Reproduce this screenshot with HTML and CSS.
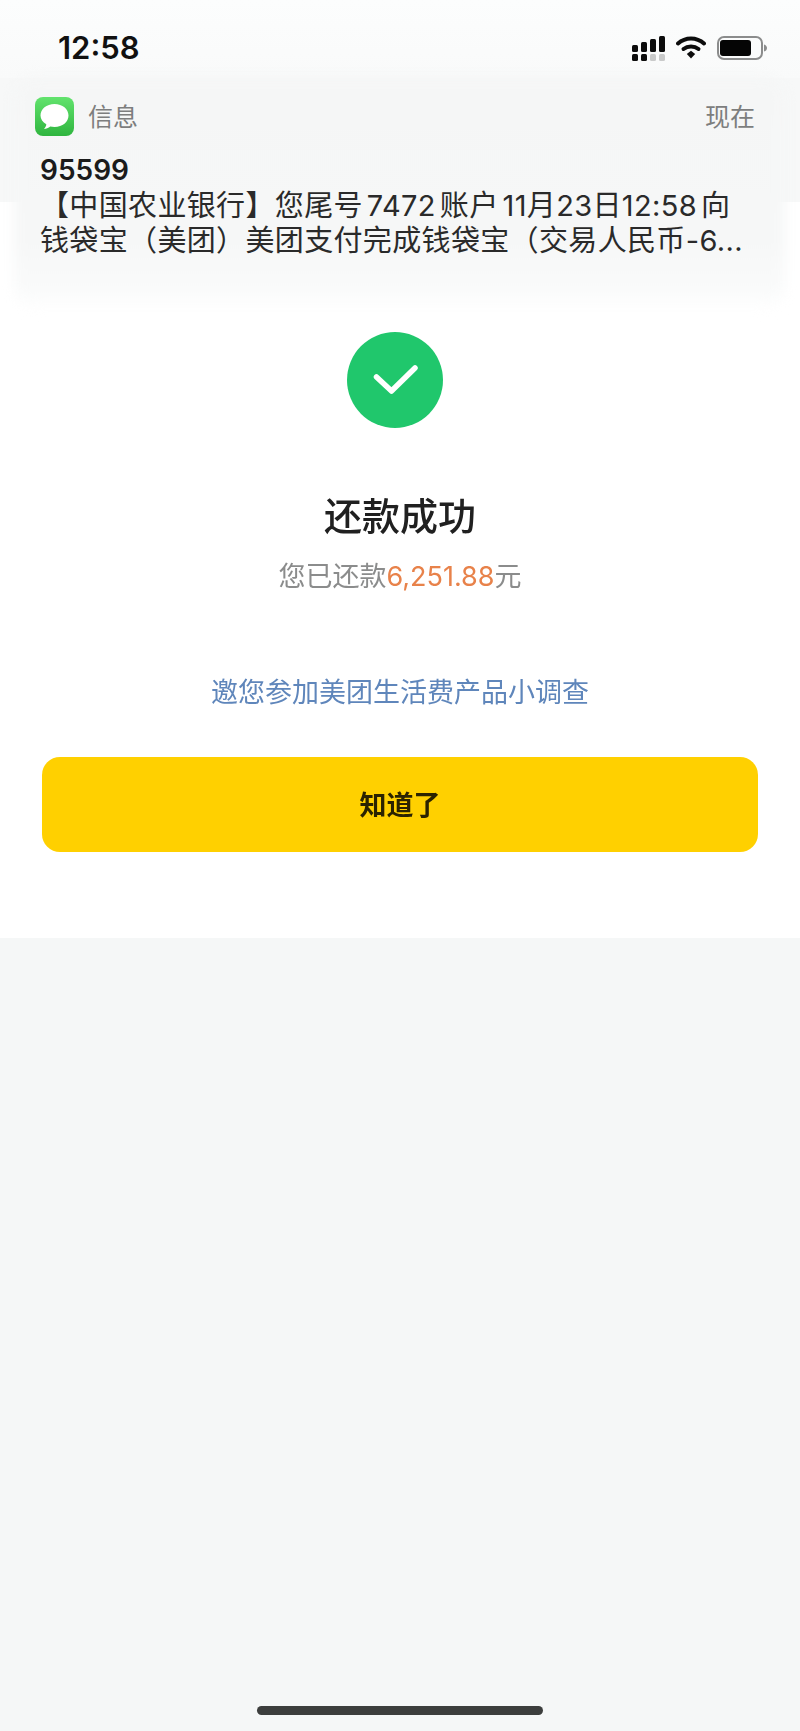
FILE: index.html
```html
<!DOCTYPE html>
<html lang="zh-CN">
<head>
<meta charset="utf-8">
<title>还款成功</title>
<link rel="stylesheet" href="styles.css">
</head>
<body>
<div class="page">
  <header class="topband">
    <div class="status">
      <span class="time">12:58</span>
      <div class="status-icons">
        <svg class="signal" width="33" height="25" viewBox="0 0 33 25">
          <rect x="0" y="9" width="6" height="7" rx="1.500" fill="#0c0c0c"/>
          <rect x="9" y="6" width="6" height="10" rx="1.500" fill="#0c0c0c"/>
          <rect x="18" y="3" width="6" height="13" rx="1.500" fill="#0c0c0c"/>
          <rect x="27" y="0" width="6" height="16" rx="1.500" fill="#0c0c0c"/>
          <rect x="0" y="18" width="6" height="7" rx="1.500" fill="#0c0c0c"/>
          <rect x="9" y="18" width="6" height="7" rx="1.500" fill="#0c0c0c"/>
          <rect x="18" y="18" width="6" height="7" rx="1.500" fill="#c9caca"/>
          <rect x="27" y="18" width="6" height="7" rx="1.500" fill="#c9caca"/>
        </svg>
        <svg class="wifi" width="30" height="23" viewBox="0 0 30 23">
          <path d="M2 7.500C9.500 .8 20.500 .8 28 7.500" fill="none" stroke="#0c0c0c" stroke-width="4" stroke-linecap="round"/>
          <path d="M7.500 13C11.800 9.500 18.200 9.500 22.500 13" fill="none" stroke="#0c0c0c" stroke-width="4" stroke-linecap="round"/>
          <path d="M10.800 18 15 14.800 19.200 18 15 22.500Z" fill="#0c0c0c"/>
        </svg>
        <svg class="battery" width="50" height="24" viewBox="0 0 50 24">
          <rect x="1" y="1" width="44" height="22" rx="6" fill="none" stroke="#8b8c8c" stroke-width="2"/>
          <rect x="3" y="4" width="31" height="16" rx="3" fill="#050505"/>
          <path d="M47 8.500C49 9 50 10.500 50 12S49 15 47 15.500Z" fill="#8b8c8c"/>
        </svg>
      </div>
    </div>
  </header>

  <aside class="notice">
    <div class="notice-head">
      <svg class="app-icon" width="39" height="39" viewBox="0 0 39 39">
        <defs>
          <linearGradient id="msgGrad" x1="0" y1="0" x2="0" y2="1">
            <stop offset="0" stop-color="#62e36d"/>
            <stop offset="1" stop-color="#2fb53f"/>
          </linearGradient>
        </defs>
        <rect width="39" height="39" rx="8" fill="url(#msgGrad)"/>
        <path d="M19.500 7C27.500 7 33.500 12 33.500 18.500S27.500 30 19.500 30C18 30 16.600 29.800 15.300 29.500 13.500 31 11 32 9 32 10.500 30.500 11.300 28.800 11.300 27.300 7.700 25.200 5.500 22.100 5.500 18.500 5.500 12 11.500 7 19.500 7Z" fill="#fff"/>
      </svg>
      <span class="app-name">信息</span>
      <span class="when">现在</span>
    </div>
    <div class="sender">95599</div>
    <p class="message">【中国农业银行】您尾号 7472 账户 11月23日12:58 向</p>
    <p class="message">钱袋宝（美团）美团支付完成钱袋宝（交易人民币-6...</p>
  </aside>

  <main class="result">
    <div class="check">
      <svg width="48" height="36" viewBox="-2 -2 48 36">
        <path d="M3.500 13 18.500 27 42 4" fill="none" stroke="#fff" stroke-width="5.500" stroke-linecap="round" stroke-linejoin="round"/>
      </svg>
    </div>
    <h1 class="title">还款成功</h1>
    <p class="summary">您已还款<span class="amount">6,251.88</span>元</p>
    <a class="survey">邀您参加美团生活费产品小调查</a>
    <button class="confirm">知道了</button>
  </main>

  <div class="rest">
    <div class="home-bar"></div>
  </div>
</div>
</body>
</html>
```

FILE: styles.css
```css
* { box-sizing: border-box; }
html, body { margin: 0; padding: 0; }
body {
  background: #f5f7f7;
  font-family: "Inter", "Noto Sans CJK SC", sans-serif;
  color: #1f1f1f;
}
.page {
  position: relative;
  width: 800px;
  height: 1731px;
  display: flex;
  flex-direction: column;
  overflow: hidden;
  filter: blur(.45px);
}
.topband {
  height: 202px;
  background: #f7f8f8;
  flex: none;
}
.status {
  height: 78px;
  padding: 30px 33px 0 58px;
  display: flex;
  justify-content: space-between;
  align-items: flex-start;
  background: linear-gradient(#fcfdfd, #f9fafa);
}
.time {
  font-size: 31px;
  line-height: 36px;
  font-weight: 600;
  color: #111;
}
.status-icons {
  display: flex;
  align-items: flex-start;
  gap: 11px;
  padding-top: 6px;
}
.notice {
  position: absolute;
  z-index: 1;
  left: 14px;
  top: 78px;
  width: 771px;
  height: 232px;
  padding: 19px 30px 0 21px;
}
.notice::before {
  content: "";
  position: absolute;
  z-index: -1;
  inset: 0;
  border-radius: 22px;
  background: linear-gradient(#f5f6f6 0, #f6f7f7 70%, #fafbfb 92%, #fff 100%);
  filter: blur(6px);
}
.notice-head {
  display: flex;
  align-items: center;
  height: 39px;
}
.app-name {
  margin: -4px 0 0 14px;
  font-size: 25px;
  color: #7d7e7e;
}
.when {
  margin: -4px 0 0 auto;
  font-size: 25px;
  color: #7d7e7e;
}
.sender {
  margin: 17px 0 0 5px;
  font-size: 28px;
  line-height: 34px;
  font-weight: 600;
  color: #1b1b1b;
}
.message {
  margin: 0 0 0 5px;
  font-size: 29px;
  line-height: 35px;
  letter-spacing: .35px;
  word-spacing: -4.5px;
  white-space: nowrap;
  color: #2a2a2a;
}
.sender + .message { margin-top: 1px; }
.result {
  flex: none;
  height: 736px;
  background: #fff;
  display: flex;
  flex-direction: column;
  align-items: center;
  padding-top: 130px;
}
.check {
  width: 96px;
  height: 96px;
  margin-left: -10px;
  border-radius: 50%;
  background: #20c76c;
  display: flex;
  align-items: center;
  justify-content: center;
}
.title {
  margin: 61px 0 0;
  font-size: 38px;
  line-height: 54px;
  font-weight: 500;
  color: #202020;
}
.summary {
  margin: 14px 0 0;
  font-size: 27px;
  line-height: 40px;
  color: #8b8c8c;
}
.amount { color: #e8824a; }
.survey {
  margin-top: 76px;
  font-size: 27px;
  line-height: 40px;
  color: #5f86bb;
}
.confirm {
  margin-top: 44px;
  width: 716px;
  height: 95px;
  padding: 0 0 2px;
  border: 0;
  border-radius: 18px;
  background: #ffd000;
  font: inherit;
  font-size: 27px;
  font-weight: 700;
  color: #2b2300;
}
.rest {
  flex: 1;
  display: flex;
  flex-direction: column;
  justify-content: flex-end;
  align-items: center;
  padding-bottom: 16px;
}
.home-bar {
  width: 286px;
  height: 9px;
  border-radius: 5px;
  background: #3c3e3d;
}
```
